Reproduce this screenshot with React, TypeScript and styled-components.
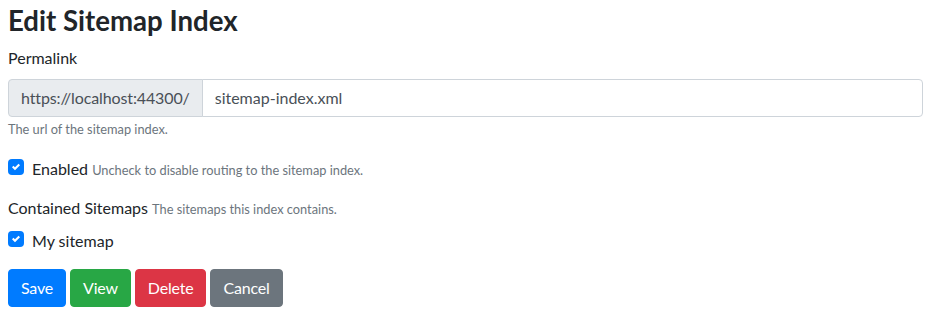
import React from "react";
import styled, { createGlobalStyle } from "styled-components";

const GlobalStyle = createGlobalStyle`
  html, body { margin: 0; padding: 0; background: #fff; }
  body {
    font-family: "Lato", "Noto Sans", sans-serif;
    font-size: 16px;
    line-height: 1.5;
    color: #212529;
  }
  * { box-sizing: border-box; }
`;

const Page = styled.div`
  padding: 4px 8px 0 8px;
`;

const Title = styled.h1`
  margin: 0 0 8px 0;
  font-size: 27.6px;
  line-height: 33.6px;
  font-weight: 700;
  color: #212529;
`;

const FieldLabel = styled.label`
  display: block;
  line-height: 24px;
  margin-bottom: 9px;
`;

const InputGroup = styled.div`
  display: flex;
  height: 38px;
  width: 100%;
`;

const Prefix = styled.span`
  display: flex;
  align-items: center;
  padding: 0 12px;
  background: #e9ecef;
  border: 1px solid #ced4da;
  border-radius: 4px 0 0 4px;
  color: #495057;
  white-space: nowrap;
  letter-spacing: -0.12px;
`;

const TextInput = styled.input`
  flex: 1;
  min-width: 0;
  height: 38px;
  margin-left: -1px;
  padding: 6px 12px;
  border: 1px solid #ced4da;
  border-radius: 0 4px 4px 0;
  font: inherit;
  color: #495057;
  background: #fff;
  outline: none;
`;

const Help = styled.small<{ $inline?: boolean }>`
  display: ${(p) => (p.$inline ? "inline" : "block")};
  margin-top: ${(p) => (p.$inline ? "0" : "3px")};
  font-size: 12.8px;
  line-height: 19.2px;
  color: #6c757d;
`;

const Group = styled.div<{ $mt: number }>`
  margin-top: ${(p) => p.$mt}px;
`;

const CheckRow = styled.label`
  display: flex;
  align-items: flex-start;
  gap: 8px;
  line-height: 24px;
  cursor: pointer;
`;

const Box = styled.span`
  flex: none;
  width: 16px;
  height: 16px;
  margin-top: 2px;
  border-radius: 4px;
  background: #007bff;
  display: flex;
  align-items: center;
  justify-content: center;
`;

const CheckText = styled.span`
  white-space: nowrap;
`;

const SectionLabel = styled.div`
  line-height: 24px;
`;

const Buttons = styled.div`
  display: flex;
  gap: 4px;
`;

const Button = styled.button<{ $bg: string }>`
  height: 38px;
  padding: 0 12px;
  border: 1px solid ${(p) => p.$bg};
  border-radius: 4px;
  background: ${(p) => p.$bg};
  color: #fff;
  font: inherit;
  line-height: 24px;
  letter-spacing: -0.2px;
  cursor: pointer;
`;

const Check = () => (
  <Box>
    <svg width="8" height="8" viewBox="0 0 8 8">
      <path
        fill="#fff"
        d="M6.564.75l-3.59 3.612-1.538-1.55L0 4.26l2.974 2.99L8 2.193z"
      />
    </svg>
  </Box>
);

export default function App() {
  return (
    <>
      <GlobalStyle />
      <Page>
        <Title>Edit Sitemap Index</Title>
        <FieldLabel htmlFor="permalink">Permalink</FieldLabel>
        <InputGroup>
          <Prefix>https://localhost:44300/</Prefix>
          <TextInput id="permalink" defaultValue="sitemap-index.xml" />
        </InputGroup>
        <Help>The url of the sitemap index.</Help>

        <Group $mt={18}>
          <CheckRow>
            <Check />
            <CheckText>
              Enabled <Help $inline>Uncheck to disable routing to the sitemap index.</Help>
            </CheckText>
          </CheckRow>
        </Group>

        <Group $mt={15.5}>
          <SectionLabel>
            Contained Sitemaps <Help $inline>The sitemaps this index contains.</Help>
          </SectionLabel>
        </Group>

        <Group $mt={8.5}>
          <CheckRow>
            <Check />
            <CheckText>My sitemap</CheckText>
          </CheckRow>
        </Group>

        <Group $mt={16}>
          <Buttons>
            <Button $bg="#007bff">Save</Button>
            <Button $bg="#28a745">View</Button>
            <Button $bg="#dc3545">Delete</Button>
            <Button $bg="#6c757d">Cancel</Button>
          </Buttons>
        </Group>
      </Page>
    </>
  );
}
